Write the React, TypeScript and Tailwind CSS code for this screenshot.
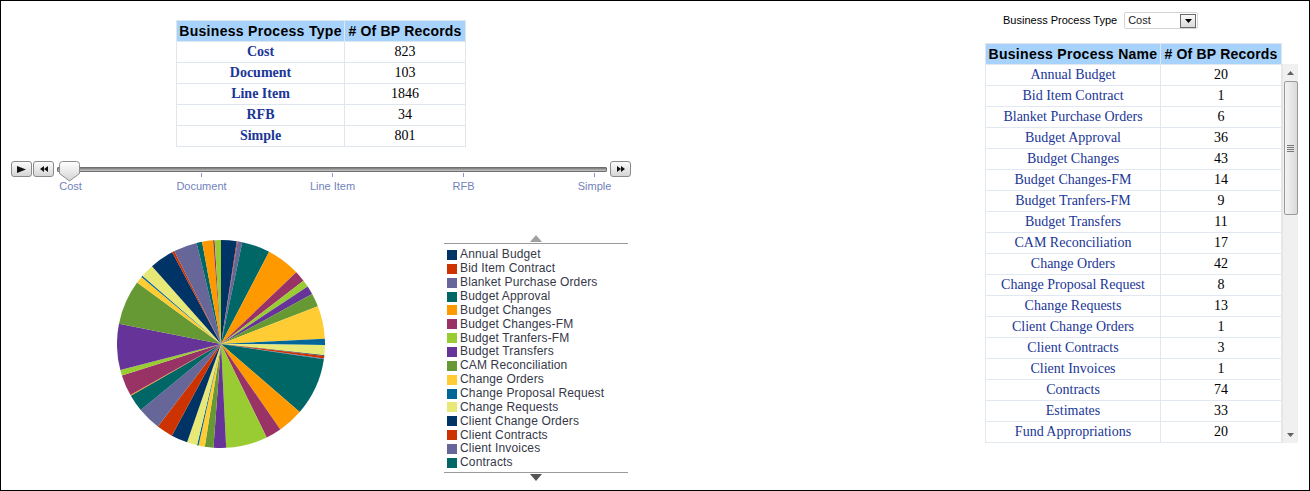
import React from "react"

const typeRows = [
  { name: "Cost", count: 823 },
  { name: "Document", count: 103 },
  { name: "Line Item", count: 1846 },
  { name: "RFB", count: 34 },
  { name: "Simple", count: 801 },
]

const bpRows = [
  { name: "Annual Budget", count: 20 },
  { name: "Bid Item Contract", count: 1 },
  { name: "Blanket Purchase Orders", count: 6 },
  { name: "Budget Approval", count: 36 },
  { name: "Budget Changes", count: 43 },
  { name: "Budget Changes-FM", count: 14 },
  { name: "Budget Tranfers-FM", count: 9 },
  { name: "Budget Transfers", count: 11 },
  { name: "CAM Reconciliation", count: 17 },
  { name: "Change Orders", count: 42 },
  { name: "Change Proposal Request", count: 8 },
  { name: "Change Requests", count: 13 },
  { name: "Client Change Orders", count: 1 },
  { name: "Client Contracts", count: 3 },
  { name: "Client Invoices", count: 1 },
  { name: "Contracts", count: 74 },
  { name: "Estimates", count: 33 },
  { name: "Fund Appropriations", count: 20 },
]

// rest of the records that sit below the scroll in the table
const hiddenCounts = [53, 16, 11, 8, 2, 13, 21, 21, 30, 22, 1, 27, 7, 59, 57, 9, 2, 17, 31, 3, 30, 7, 14, 2, 8]

const palette = [
  "#003366", "#cc3300", "#666699", "#006666", "#ff9900", "#993366",
  "#99cc33", "#663399", "#669933", "#ffcc33", "#006699", "#e8e877",
]

const sliderLabels = ["Cost", "Document", "Line Item", "RFB", "Simple"]

const Pie = () => {
  const values = [...bpRows.map((r) => r.count), ...hiddenCounts]
  const total = values.reduce((a, b) => a + b, 0)
  const r = 104
  const c = 104
  let acc = 0
  const pt = (v: number) => {
    const a = (v / total) * Math.PI * 2
    return [c + r * Math.sin(a), c - r * Math.cos(a)]
  }
  return (
    <svg width="208" height="208" viewBox="0 0 208 208">
      {values.map((v, i) => {
        const [x1, y1] = pt(acc)
        acc += v
        const [x2, y2] = pt(acc)
        const large = v / total > 0.5 ? 1 : 0
        return (
          <path
            key={i}
            d={`M${c},${c} L${x1},${y1} A${r},${r} 0 ${large} 1 ${x2},${y2} Z`}
            fill={palette[i % palette.length]}
          />
        )
      })}
    </svg>
  )
}

const SliderButton = ({ children }: { children: React.ReactNode }) => (
  <div className="w-[21px] h-[16px] rounded-[3px] border border-[#8a8a8a] bg-gradient-to-b from-[#fbfbfb] to-[#d6d6d6] flex items-center justify-center shrink-0">
    {children}
  </div>
)

const App = () => {
  return (
    <div className="w-[1310px] h-[491px] border border-black bg-white flex font-['Liberation_Sans',Arial,sans-serif] overflow-hidden">
      {/* Left side: type table, slider, pie */}
      <div className="w-[639px] shrink-0 flex flex-col">
        <table className="mt-[19px] ml-[175px] w-[290px] border-collapse border border-[#cdd8e3] text-[14px]">
          <thead>
            <tr className="bg-[#a6d2fb] h-[21px]">
              <th className="w-[168px] border border-[#dfe6ee] font-bold leading-[20px] p-0 tracking-[0.3px]">Business Process Type</th>
              <th className="border border-[#dfe6ee] font-bold leading-[20px] p-0 tracking-[0.2px]"># Of BP Records</th>
            </tr>
          </thead>
          <tbody className="font-['Liberation_Serif','Times_New_Roman',serif]">
            {typeRows.map((row) => (
              <tr key={row.name} className="h-[21px]">
                <td className="border border-[#dfe6ee] text-center font-bold text-[#1a3696] leading-[20px] p-0">{row.name}</td>
                <td className="border border-[#dfe6ee] text-center text-black leading-[20px] p-0">{row.count}</td>
              </tr>
            ))}
          </tbody>
        </table>

        {/* Slider */}
        <div className="mt-[14px] ml-[10px] flex items-center h-[16px]">
          <SliderButton>
            <svg width="9" height="7" viewBox="0 0 9 7"><path d="M0 0 L9 3.5 L0 7 Z" fill="#111" /></svg>
          </SliderButton>
          <div className="ml-px">
            <SliderButton>
              <svg width="8" height="6" viewBox="0 0 8 6"><path d="M4 0 L0 3 L4 6 Z M8 0 L4 3 L8 6 Z" fill="#111" /></svg>
            </SliderButton>
          </div>
          <div className="relative ml-[3px] w-[550px] h-[5px] shrink-0 border border-[#6e6e6e] bg-gradient-to-b from-[#7a7a7a] to-[#c9c9c9] rounded-[1px]">
            <svg className="absolute left-[1px] top-[-7px]" width="21" height="21" viewBox="0 0 21 21">
              <defs>
                <linearGradient id="thumb" x1="0" y1="0" x2="0" y2="1">
                  <stop offset="0" stopColor="#ffffff" />
                  <stop offset="1" stopColor="#d4d4d4" />
                </linearGradient>
              </defs>
              <path d="M3.5 0.5 H17.5 Q20.5 0.5 20.5 3.5 V12.5 L10.5 20 L0.5 12.5 V3.5 Q0.5 0.5 3.5 0.5 Z" fill="url(#thumb)" stroke="#8c8c8c" />
            </svg>
          </div>
          <div className="ml-[3px]">
            <SliderButton>
              <svg width="8" height="6" viewBox="0 0 8 6"><path d="M0 0 L4 3 L0 6 Z M4 0 L8 3 L4 6 Z" fill="#111" /></svg>
            </SliderButton>
          </div>
        </div>
        <div className="ml-[4px] -mt-[4px] flex">
          {sliderLabels.map((l, i) => (
            <div key={l} className="w-[131px] shrink-0 flex flex-col items-center">
              <div className={i === 0 ? "w-px h-[4px]" : "w-px h-[4px] bg-[#8a98c8]"} />
              <div className="mt-[3px] text-[11px] leading-[13px] text-[#7282bb] whitespace-nowrap">{l}</div>
            </div>
          ))}
        </div>

        {/* Pie + legend */}
        <div className="mt-[41px] flex items-start">
          <div className="ml-[116px] mt-[6px] shrink-0">
            <Pie />
          </div>
          <div className="ml-[119px] w-[184px] shrink-0 flex flex-col">
            <div className="h-[8px] flex justify-center items-end">
              <svg width="12" height="7" viewBox="0 0 12 7"><path d="M6 0 L12 7 L0 7 Z" fill="#a0a0a0" /></svg>
            </div>
            <div className="mt-[1px] border-t border-[#9a9a9a]" />
            <div className="pt-[4px] flex flex-col">
              {bpRows.slice(0, 16).map((row, i) => (
                <div key={row.name} className="flex items-center h-[13.87px] pl-[3px]">
                  <div className="w-[10px] h-[10px] shrink-0" style={{ backgroundColor: palette[i % palette.length] }} />
                  <span className="ml-[3px] text-[12px] leading-[13px] text-[#363848] whitespace-nowrap tracking-[0.15px]">{row.name}</span>
                </div>
              ))}
            </div>
            <div className="mt-[2px] border-t border-[#9a9a9a]" />
            <div className="h-[8px] flex justify-center items-start pt-[1px]">
              <svg width="12" height="7" viewBox="0 0 12 7"><path d="M0 0 L12 0 L6 7 Z" fill="#555" /></svg>
            </div>
          </div>
        </div>
      </div>

      {/* Right side: filter + name table */}
      <div className="ml-[345px] pt-[11px] flex flex-col">
        <div className="flex items-center ml-[18px] h-[17px]">
          <span className="text-[11px] text-black">Business Process Type</span>
          <div className="ml-[7px] w-[74px] h-[17px] border border-[#d4d4d4] rounded-[2px] bg-white flex items-center justify-between pl-[3px] pr-[1px]">
            <span className="text-[11px] text-[#222]">Cost</span>
            <div className="w-[16px] h-[14px] border border-[#6a6a6a] bg-gradient-to-b from-[#fafafa] to-[#dadada] flex items-center justify-center">
              <svg width="7" height="4" viewBox="0 0 7 4"><path d="M0 0 L7 0 L3.5 4 Z" fill="#000" /></svg>
            </div>
          </div>
        </div>

        <table className="mt-[14px] w-[297px] border-collapse text-[14px]">
          <thead>
            <tr className="bg-[#a6d2fb] h-[21px]">
              <th className="w-[175px] border border-[#dfe6ee] font-bold leading-[20px] p-0 tracking-[0.3px]">Business Process Name</th>
              <th className="border border-[#dfe6ee] font-bold leading-[20px] p-0 tracking-[0.2px]"># Of BP Records</th>
            </tr>
          </thead>
        </table>
        <div className="flex -mt-px">
          <table className="w-[297px] border-collapse border border-[#d6dee7] text-[14px] font-['Liberation_Serif','Times_New_Roman',serif]">
            <tbody>
              {bpRows.map((row) => (
                <tr key={row.name} className="h-[21px]">
                  <td className="w-[175px] border border-[#e2e8ef] text-center text-[#1a3696] leading-[20px] p-0">{row.name}</td>
                  <td className="border border-[#e2e8ef] text-center text-black leading-[20px] p-0">{row.count}</td>
                </tr>
              ))}
            </tbody>
          </table>
          {/* scrollbar */}
          <div className="w-[16px] h-[379px] bg-[#f0f0f0] border-l border-[#e6e6e6] flex flex-col items-center">
            <div className="h-[17px] flex items-center justify-center">
              <svg width="7" height="4" viewBox="0 0 7 4"><path d="M0 4 L3.5 0 L7 4 Z" fill="#606060" /></svg>
            </div>
            <div className="w-[14px] h-[134px] rounded-[2px] border border-[#9a9a9a] bg-gradient-to-r from-[#f4f4f4] to-[#d9d9d9] flex flex-col items-center justify-center gap-[1px]">
              <div className="w-[7px] h-px bg-[#777]" />
              <div className="w-[7px] h-px bg-[#777]" />
              <div className="w-[7px] h-px bg-[#777]" />
              <div className="w-[7px] h-px bg-[#777]" />
            </div>
            <div className="flex-1" />
            <div className="h-[17px] flex items-center justify-center">
              <svg width="7" height="4" viewBox="0 0 7 4"><path d="M0 0 L7 0 L3.5 4 Z" fill="#606060" /></svg>
            </div>
          </div>
        </div>
      </div>
    </div>
  )
}

export default App
